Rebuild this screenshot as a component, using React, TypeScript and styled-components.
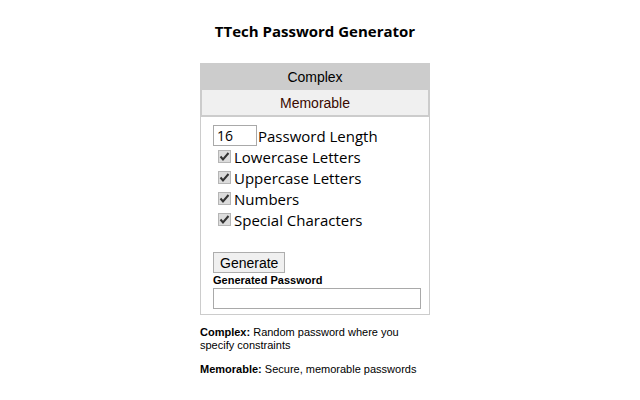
import React, { useState } from "react";
import styled, { createGlobalStyle } from "styled-components";

const Global = createGlobalStyle`
  html, body { margin: 0; padding: 0; background: #fff; }
  body { font-family: "Open Sans", "Noto Sans", sans-serif; color: #000; }
`;

const Page = styled.div`
  width: 630px;
  display: flex;
  flex-direction: column;
  align-items: center;
  padding-top: 21px;
`;

const Title = styled.h1`
  margin: 0 0 22px;
  font-family: "Open Sans", sans-serif;
  font-weight: 700;
  font-size: 15px;
  line-height: 20px;
  letter-spacing: 0;
`;

const Column = styled.div`
  width: 230px;
  display: flex;
  flex-direction: column;
`;

const Tab = styled.button<{ $active?: boolean }>`
  display: block;
  width: 100%;
  height: 27px;
  margin: 0;
  padding: 0;
  font-family: "Liberation Sans", Arial, sans-serif;
  font-size: 14px;
  color: ${(p) => (p.$active ? "#000" : "#3a0a00")};
  background: ${(p) => (p.$active ? "#cccccc" : "#f0f0f0")};
  border: ${(p) => (p.$active ? "none" : "2px solid #cccccc")};
  border-top: none;
  cursor: pointer;
`;

const Content = styled.div`
  border: 1px solid #cccccc;
  border-top: none;
  padding: 7px 8px 5px 12px;
  display: flex;
  flex-direction: column;
`;

const LengthRow = styled.label`
  display: flex;
  align-items: center;
  gap: 1px;
  height: 21px;
  font-size: 15px;
  margin-top: 1px;
`;

const NumberInput = styled.input`
  width: 44px;
  height: 21px;
  box-sizing: border-box;
  border: 1px solid #a9a9a9;
  padding: 1px 3px;
  font-family: "Open Sans", sans-serif;
  font-size: 14px;
  margin: 0;
  outline: none;
`;

const CheckRow = styled.label`
  display: flex;
  align-items: center;
  height: 21px;
  font-size: 15px;
  padding-left: 5px;
`;

const Check = styled.input`
  appearance: none;
  width: 13px;
  height: 13px;
  margin: 0 3px 0 0;
  box-sizing: border-box;
  border: 1px solid #b5b5b5;
  background: #dcdcdc
    url("data:image/svg+xml,%3Csvg xmlns='http://www.w3.org/2000/svg' viewBox='0 0 13 13'%3E%3Cpath d='M2.5 6.5 L5 9.5 L10.5 3' fill='none' stroke='%23333' stroke-width='2'/%3E%3C/svg%3E")
    center / 13px 13px no-repeat;
  &:not(:checked) {
    background: #fff;
  }
`;

const Spacer = styled.div`
  height: 22px;
`;

const GenButton = styled.button`
  align-self: flex-start;
  height: 21px;
  padding: 0 6px;
  margin: 0;
  font-family: "Liberation Sans", Arial, sans-serif;
  font-size: 14px;
  background: #f0f0f0;
  border: 1px solid #adadad;
  border-radius: 0;
  cursor: pointer;
`;

const OutLabel = styled.div`
  font-family: "Liberation Sans", Arial, sans-serif;
  font-weight: 700;
  font-size: 11px;
  line-height: 13px;
  margin-top: 1px;
`;

const OutInput = styled.input`
  width: 208px;
  height: 21px;
  box-sizing: border-box;
  border: 1px solid #a9a9a9;
  margin: 1px 0 0;
  font-size: 13px;
  outline: none;
`;

const Note = styled.p`
  margin: 11px 0 0;
  font-family: "Liberation Sans", Arial, sans-serif;
  font-size: 11px;
  line-height: 13px;
  & + & {
    margin-top: 11px;
  }
  b {
    font-weight: 700;
  }
`;

const options = [
  "Lowercase Letters",
  "Uppercase Letters",
  "Numbers",
  "Special Characters",
];

export default function App() {
  const [checks, setChecks] = useState(options.map(() => true));
  return (
    <>
      <Global />
      <Page>
        <Title>TTech Password Generator</Title>
        <Column>
          <Tab $active>Complex</Tab>
          <Tab>Memorable</Tab>
          <Content>
            <LengthRow>
              <NumberInput defaultValue="16" />
              Password Length
            </LengthRow>
            {options.map((o, i) => (
              <CheckRow key={o}>
                <Check
                  type="checkbox"
                  checked={checks[i]}
                  onChange={() =>
                    setChecks((c) => c.map((v, j) => (j === i ? !v : v)))
                  }
                />
                {o}
              </CheckRow>
            ))}
            <Spacer />
            <GenButton>Generate</GenButton>
            <OutLabel>Generated Password</OutLabel>
            <OutInput readOnly />
          </Content>
          <Note>
            <b>Complex:</b> Random password where you specify constraints
          </Note>
          <Note>
            <b>Memorable:</b> Secure, memorable passwords
          </Note>
        </Column>
      </Page>
    </>
  );
}
